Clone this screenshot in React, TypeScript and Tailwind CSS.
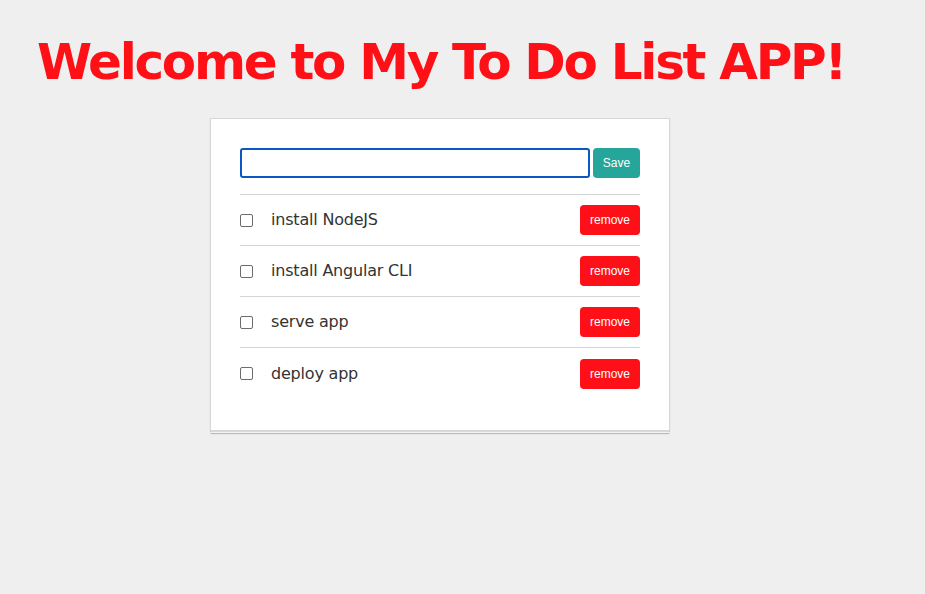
import { useState } from 'react';

type Todo = { id: number; title: string; done: boolean };

const initial: Todo[] = [
  { id: 1, title: 'install NodeJS', done: false },
  { id: 2, title: 'install Angular CLI', done: false },
  { id: 3, title: 'serve app', done: false },
  { id: 4, title: 'deploy app', done: false },
];

export default function App() {
  const [todos, setTodos] = useState<Todo[]>(initial);
  const [text, setText] = useState('');

  const save = () => {
    if (!text.trim()) return;
    setTodos((t) => [...t, { id: Date.now(), title: text.trim(), done: false }]);
    setText('');
  };

  return (
    <div className="min-h-[594px] bg-[#efefef] font-['DejaVu_Sans',sans-serif] text-[#333]">
      <h1 className="pl-[37px] pt-[31px] text-[50px] font-bold leading-[62px] tracking-[-2.3px] text-[#ff1016]">
        Welcome to My To Do List APP!
      </h1>

      <div className="ml-[210px] mt-[25px] w-[460px] border border-[#d6d6d6] bg-white px-[29px] pt-[29px] pb-[31px] shadow-[0_1px_1px_rgba(0,0,0,0.12),0_3px_0_-1px_#f8f8f8,0_4px_1px_-1px_rgba(0,0,0,0.22)]">
        <div className="flex items-center gap-[3px] border-b border-[#d4d4d4] pb-[16px]">
          <input
            value={text}
            onChange={(e) => setText(e.target.value)}
            className="h-[30px] w-[350px] rounded-[3px] border-2 border-[#0b57c3] px-2 text-sm outline-none"
          />
          <button
            onClick={save}
            className="h-[30px] flex-1 rounded-[4px] bg-[#26a69a] font-['Liberation_Sans',sans-serif] text-[12px] text-white"
          >
            Save
          </button>
        </div>

        <ul>
          {todos.map((t, i) => (
            <li
              key={t.id}
              className={
                'flex h-[51px] items-center ' + (i < todos.length - 1 ? 'border-b border-[#d4d4d4]' : '')
              }
            >
              <input
                type="checkbox"
                checked={t.done}
                onChange={() =>
                  setTodos((all) => all.map((x) => (x.id === t.id ? { ...x, done: !x.done } : x)))
                }
                className="h-[13px] w-[13px] appearance-none rounded-[2px] border border-[#6b6b6b] bg-white checked:bg-[#0b57c3]"
              />
              <span className="ml-[18px] flex-1 text-[16px] tracking-[-0.2px] text-[#333]">{t.title}</span>
              <button
                onClick={() => setTodos((all) => all.filter((x) => x.id !== t.id))}
                className="h-[30px] w-[60px] rounded-[4px] bg-[#ff0f17] font-['Liberation_Sans',sans-serif] text-[12px] text-white"
              >
                remove
              </button>
            </li>
          ))}
        </ul>
      </div>
    </div>
  );
}
